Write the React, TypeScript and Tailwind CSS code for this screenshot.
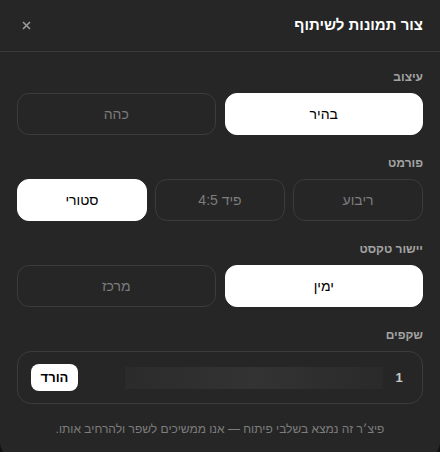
import React, { useState } from 'react';

type Opt = { id: string; label: string };

const styles: Opt[] = [
  { id: 'light', label: 'בהיר' },
  { id: 'dark', label: 'כהה' },
];
const formats: Opt[] = [
  { id: 'square', label: 'ריבוע' },
  { id: 'feed', label: 'פיד 4:5' },
  { id: 'story', label: 'סטורי' },
];
const aligns: Opt[] = [
  { id: 'right', label: 'ימין' },
  { id: 'center', label: 'מרכז' },
];

function Segment({
  options,
  value,
  onChange,
  cols,
}: {
  options: Opt[];
  value: string;
  onChange: (v: string) => void;
  cols: 2 | 3;
}) {
  return (
    <div className={cols === 2 ? 'grid grid-cols-2 gap-[9px]' : 'grid grid-cols-3 gap-[8px]'}>
      {options.map((o) => {
        const active = o.id === value;
        return (
          <button
            key={o.id}
            onClick={() => onChange(o.id)}
            className={
              active
                ? 'h-[42px] rounded-[12px] bg-white text-[14px] text-black border border-white'
                : 'h-[42px] rounded-[12px] border border-[#3c3c3c] text-[14px] text-[#7c7c7c]'
            }
          >
            {o.label}
          </button>
        );
      })}
    </div>
  );
}

function Section({ title, children }: { title: string; children: React.ReactNode }) {
  return (
    <div>
      <div className="h-[16px] mb-[8px] text-[12px] leading-[16px] font-bold text-[#a3a3a3]">{title}</div>
      {children}
    </div>
  );
}

export default function App() {
  const [style, setStyle] = useState('light');
  const [format, setFormat] = useState('story');
  const [align, setAlign] = useState('right');

  return (
    <div
      dir="rtl"
      className="w-[440px] bg-[#111]"
      style={{ fontFamily: '"Liberation Sans", "DejaVu Sans", Arial, sans-serif' }}
    >
      <div className="w-[440px] h-[458px] bg-[#262626] rounded-b-[16px] overflow-hidden">
        <div className="h-[52px] flex items-center justify-between pr-[17px] pl-[18px] border-b border-[#3a3a3a]">
          <h1 className="text-[15px] font-bold text-white">צור תמונות לשיתוף</h1>
          <button className="text-[#9a9a9a] w-[16px] h-[16px] flex items-center justify-center">
            <svg width="9" height="9" viewBox="0 0 9 9" fill="none" stroke="currentColor" strokeWidth="1.6">
              <path d="M1 1l7 7M8 1L1 8" />
            </svg>
          </button>
        </div>

        <div className="px-[17px] pt-[17px] flex flex-col gap-[20px]">
          <Section title="עיצוב">
            <Segment options={styles} value={style} onChange={setStyle} cols={2} />
          </Section>
          <Section title="פורמט">
            <Segment options={formats} value={format} onChange={setFormat} cols={3} />
          </Section>
          <Section title="יישור טקסט">
            <Segment options={aligns} value={align} onChange={setAlign} cols={2} />
          </Section>
          <Section title="שקפים">
            <div className="h-[53px] rounded-[14px] border border-[#3c3c3c] flex items-center pr-[19px] pl-[13px] gap-[12px]">
              <span className="text-[13px] font-bold text-[#c8c8c8] w-[8px] text-center">1</span>
              <div className="flex-1 h-[22px] bg-gradient-to-l from-[#2a2a2a] via-[#333333] to-[#2b2b2b]" />
              <button className="mr-[35px] h-[27px] w-[47px] rounded-[8px] bg-white text-black text-[13px] font-bold">
                הורד
              </button>
            </div>
          </Section>
          <p className="-mt-[4px] text-center text-[12px] text-[#7d7d7d]">
            פיצ׳ר זה נמצא בשלבי פיתוח — אנו ממשיכים לשפר ולהרחיב אותו.
          </p>
        </div>
      </div>
    </div>
  );
}
